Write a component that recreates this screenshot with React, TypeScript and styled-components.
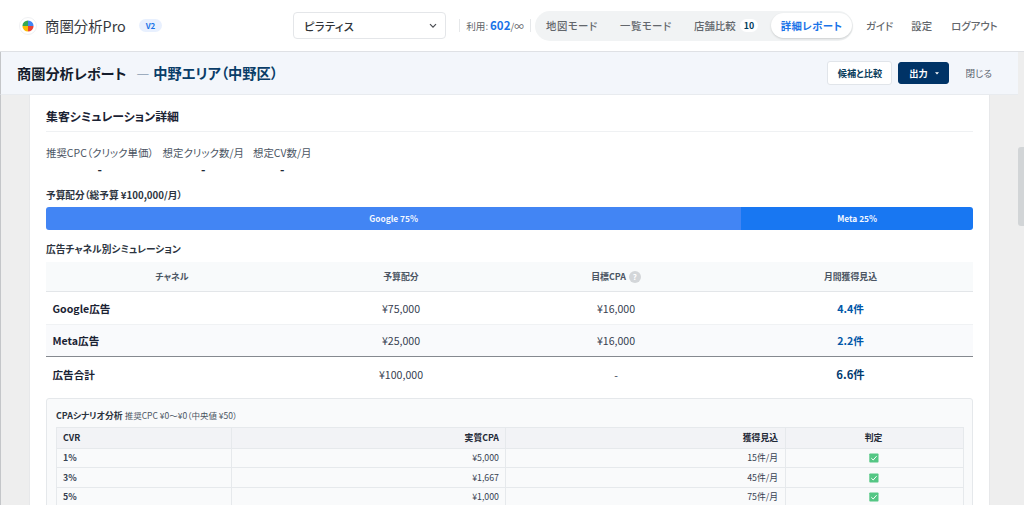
import React from "react";
import styled, { createGlobalStyle } from "styled-components";

const GlobalStyle = createGlobalStyle`
  * { box-sizing: border-box; }
  html, body { margin: 0; padding: 0; overflow: hidden; }
  body {
    font-family: "Noto Sans CJK JP", "Noto Sans", sans-serif;
    font-feature-settings: "palt";
    color: #1f2937;
    background: #eeeeee;
  }
`;

const Screen = styled.div`
  width: 1024px;
  height: 505px;
  display: flex;
  flex-direction: column;
  overflow: hidden;
  white-space: nowrap;
`;

const Header = styled.header`
  height: 52px;
  flex: none;
  display: flex;
  align-items: center;
  background: #fff;
  border-bottom: 1px solid #dfe1e5;
  padding-left: 19px;
`;

const LogoMark = styled.div`
  width: 18px;
  height: 18px;
  border-radius: 50%;
  border: 1px solid #f0f1f3;
  display: flex;
  align-items: center;
  justify-content: center;
`;

const Brand = styled.span`
  margin-left: 8px;
  width: 82px;
  font-size: 14.4px;
  line-height: 20px;
  color: #36393e;
`;

const Version = styled.span`
  margin-left: 12px;
  width: 23px;
  height: 13px;
  border-radius: 7px;
  background: #e8f0fe;
  color: #1a73e8;
  font-size: 8px;
  font-weight: 700;
  line-height: 14px;
  text-align: center;
`;

const Select = styled.div`
  margin-left: 131px;
  width: 153px;
  height: 27px;
  border: 1px solid #e4e6e9;
  border-radius: 4px;
  display: flex;
  align-items: center;
  justify-content: space-between;
  padding: 0 8px 0 10px;
  font-size: 11.2px;
  letter-spacing: 0.4px;
  font-weight: 500;
  color: #303338;
`;

const Usage = styled.div`
  margin-left: 13px;
  width: 72px;
  height: 13px;
  border-left: 1px solid #e6e8ea;
  border-right: 1px solid #e6e8ea;
  display: flex;
  align-items: center;
  justify-content: center;
  font-size: 9.6px;
  color: #5f6368;
  b { font-size: 11.5px; color: #1a73e8; margin-left: 2px; position: relative; top: -1px; }
`;

const Modes = styled.nav`
  margin-left: 4px;
  width: 318px;
  height: 30px;
  border-radius: 15px;
  background: #f1f3f4;
  display: flex;
  align-items: center;
  padding: 0 1px 0 11px;
  font-size: 10.4px;
  font-weight: 500;
  color: #63676c;
`;

const Mode = styled.span<{ $w: number; $track?: boolean }>`
  width: ${(p) => p.$w}px;
  flex: none;
  letter-spacing: ${(p) => (p.$track ? 0.5 : 0)}px;
`;

const Count = styled.span`
  width: 18px;
  height: 13px;
  border-radius: 7px;
  background: #fff;
  color: #003a5c;
  font-size: 8.8px;
  font-weight: 700;
  line-height: 14px;
  text-align: center;
`;

const ActiveMode = styled.span`
  margin-left: auto;
  width: 81px;
  height: 25px;
  border-radius: 13px;
  background: #fff;
  box-shadow: 0 1px 2px rgba(60, 64, 67, 0.2);
  color: #1a73e8;
  font-weight: 700;
  letter-spacing: 0.4px;
  line-height: 26px;
  text-align: center;
`;

const Link = styled.a<{ $gap: number }>`
  margin-left: ${(p) => p.$gap}px;
  font-size: 10.4px;
  font-weight: 500;
  color: #63676c;
`;

const ReportBar = styled.div`
  height: 43px;
  flex: none;
  width: 1018px;
  display: flex;
  align-items: center;
  background: #f3f6fb;
  border-bottom: 1px solid #e8ebef;
  border-left: 1px solid #c4c6c9;
  padding-left: 16px;
`;

const ReportTitle = styled.h1`
  margin: 0;
  font-size: 14.2px;
  line-height: 20px;
  font-weight: 700;
  color: #141c2c;
`;

const Area = styled.span`
  margin-left: 10px;
  font-size: 14.25px;
  line-height: 20px;
  font-weight: 700;
  color: #0a3d68;
  i { font-style: normal; font-weight: 400; color: #8a9bb0; margin-right: 4px; }
`;

const Button = styled.button<{ $primary?: boolean; $w: number }>`
  width: ${(p) => p.$w}px;
  height: ${(p) => (p.$primary ? 22 : 24)}px;
  border: 1px solid ${(p) => (p.$primary ? "#003366" : "#e1e5ea")};
  border-radius: 3px;
  background: ${(p) => (p.$primary ? "#003366" : "#fff")};
  color: ${(p) => (p.$primary ? "#fff" : "#0a3d5c")};
  font: 700 9.2px "Noto Sans CJK JP", sans-serif;
  font-feature-settings: "palt";
  padding: 0;
  display: flex;
  align-items: center;
  justify-content: center;
  gap: 7px;
`;

const Actions = styled.div`
  margin-left: auto;
  padding-right: 26px;
  display: flex;
  align-items: center;
  gap: 6px;
`;

const CloseLink = styled.span`
  margin-left: 10px;
  font-size: 9.6px;
  color: #5b6470;
`;

const Body = styled.div`
  flex: 1;
  min-height: 0;
  display: flex;
  border-left: 1px solid #c4c6c9;
  padding-left: 28px;
`;

const Paper = styled.main`
  width: 961px;
  background: #fff;
  border-left: 1px solid #e7e8ea;
  border-right: 1px solid #e7e8ea;
  padding: 0 16px;
  overflow: hidden;
`;

const ScrollThumb = styled.div`
  margin: 52px 0 0 auto;
  width: 6px;
  height: 79px;
  border-radius: 3px 0 0 3px;
  background: #d2d5d7;
`;

const SectionTitle = styled.h2`
  margin: 0;
  height: 37px;
  padding-top: 11px;
  border-bottom: 1px solid #eff1f3;
  font-size: 11.9px;
  line-height: 20px;
  color: #1a2233;
`;

const Metrics = styled.div`
  display: flex;
  gap: 9px;
  height: 55px;
  padding-top: 12px;
`;

const Metric = styled.div`
  font-size: 10.45px;
  line-height: 17px;
  color: #4b5563;
  text-align: center;
  b { display: block; font-size: 12px; line-height: 16px; color: #1f2937; }
`;

const Caption = styled.h3<{ $h: number }>`
  margin: 0;
  height: ${(p) => p.$h}px;
  line-height: 16px;
  font-size: 9.7px;
  font-weight: 700;
  color: #2c3440;
`;

const BudgetBar = styled.div`
  display: flex;
  height: 23px;
  border-radius: 3px;
  overflow: hidden;
  margin-bottom: 11px;
`;

const Share = styled.div<{ $pct: number; $color: string }>`
  width: ${(p) => p.$pct}%;
  background: ${(p) => p.$color};
  color: #f4f8ff;
  font-size: 8.35px;
  font-weight: 700;
  line-height: 23px;
  text-align: center;
`;

const ChannelRow = styled.div<{ $h: number; $bg?: string; $line?: string }>`
  display: grid;
  grid-template-columns: 252px 206px 224px 245px;
  align-items: center;
  height: ${(p) => p.$h}px;
  background: ${(p) => p.$bg || "#fff"};
  border-bottom: ${(p) => p.$line || "0"};
  font-size: 10.6px;
  color: #374151;
`;

const Cell = styled.div<{ $kind?: "name" | "head" | "gain" | "total" }>`
  display: flex;
  align-items: center;
  justify-content: ${(p) => (p.$kind === "name" ? "flex-start" : "center")};
  padding-left: ${(p) => (p.$kind === "name" ? 6.5 : 0)}px;
  font-weight: ${(p) => (p.$kind ? 700 : 400)};
  font-size: ${(p) => (p.$kind === "head" ? "8.9px" : p.$kind === "total" ? "11.3px" : "inherit")};
  color: ${(p) =>
    p.$kind === "name" ? "#1a2233" : p.$kind === "head" ? "#4b5563" : p.$kind === "gain" ? "#0057a8" : p.$kind === "total" ? "#003a70" : "inherit"};
`;

const Help = styled.span`
  margin-left: 3px;
  width: 12px;
  height: 12px;
  border-radius: 50%;
  background: #d3d6d9;
  color: #fff;
  font-size: 8px;
  line-height: 12px;
  text-align: center;
`;

const Scenario = styled.section`
  margin-top: 7px;
  height: 140px;
  border: 1px solid #e5e8eb;
  border-radius: 3px;
  background: #f9fafb;
  padding: 8px 9px 0;
`;

const ScenarioTitle = styled.div`
  height: 20px;
  line-height: 16px;
  font-size: 8.8px;
  font-weight: 700;
  color: #2c3440;
  span { font-weight: 400; font-size: 8.5px; color: #4b5563; }
`;

const ScenarioTable = styled.table`
  width: 907px;
  table-layout: fixed;
  border-collapse: collapse;
  font-size: 8.8px;
  color: #374151;
  th, td {
    border: 1px solid #e6e9ec;
    height: 19.7px;
    padding: 0 6px;
    line-height: 16px;
    text-align: right;
  }
  th { background: #f2f3f6; height: 20.5px; color: #1f2937; }
  th:first-child, td:first-child { text-align: left; font-weight: 700; }
  th:last-child, td:last-child { text-align: center; padding: 0 7px 0 5px; }
  th:nth-child(3), td:nth-child(3) { padding-right: 7px; }
  svg { display: inline-block; vertical-align: -2px; }
`;

const Check = () => (
  <svg width="10" height="10" viewBox="0 0 10 10">
    <rect x="0.3" y="0.5" width="9.2" height="9" rx="0.8" fill="#54c684" />
    <path d="M2.3 5.2 4.2 7 7.6 3.2" fill="none" stroke="#fff" strokeWidth="1" />
  </svg>
);

const Logo = () => (
  <svg width="12" height="12" viewBox="0 0 11 11">
    <path d="M5.5 5.5V.4A5.1 5.1 0 0 1 10.6 5.5Z" fill="#4285f4" />
    <path d="M5.5 5.5H10.6A5.1 5.1 0 0 1 5.5 10.6Z" fill="#ea4335" />
    <path d="M5.5 5.5V10.6A5.1 5.1 0 0 1 .4 5.5Z" fill="#fbbc04" />
    <path d="M5.5 5.5H.4A5.1 5.1 0 0 1 5.5 .4Z" fill="#34a853" />
  </svg>
);

const channels = [
  { name: "Google広告", budget: "¥75,000", cpa: "¥16,000", gain: "4.4件" },
  { name: "Meta広告", budget: "¥25,000", cpa: "¥16,000", gain: "2.2件" },
];

const scenarios = [
  ["1%", "¥5,000", "15件/月"],
  ["3%", "¥1,667", "45件/月"],
  ["5%", "¥1,000", "75件/月"],
];

export default function App() {
  return (
    <Screen>
      <GlobalStyle />
      <Header>
        <LogoMark><Logo /></LogoMark>
        <Brand>商圏分析Pro</Brand>
        <Version>V2</Version>
        <Select>
          ピラティス
          <svg width="8" height="6" viewBox="0 0 8 6"><path d="M1 1.2 4 4.2 7 1.2" fill="none" stroke="#4a4d52" strokeWidth="1.2" /></svg>
        </Select>
        <Usage>利用:<b>602</b>/∞</Usage>
        <Modes>
          <Mode $w={74} $track>地図モード</Mode>
          <Mode $w={74} $track>一覧モード</Mode>
          <Mode $w={46}>店舗比較</Mode>
          <Count>10</Count>
          <ActiveMode>詳細レポート</ActiveMode>
        </Modes>
        <Link $gap={13}>ガイド</Link>
        <Link $gap={18}>設定</Link>
        <Link $gap={19}>ログアウト</Link>
      </Header>
      <ReportBar>
        <ReportTitle>商圏分析レポート</ReportTitle>
        <Area><i>—</i>中野エリア（中野区）</Area>
        <Actions>
          <Button $w={65}>候補と比較</Button>
          <Button $w={51} $primary>
            出力
            <svg width="4" height="3" viewBox="0 0 4 3"><path d="M0 .3H4L2 2.5Z" fill="#fff" /></svg>
          </Button>
          <CloseLink>閉じる</CloseLink>
        </Actions>
      </ReportBar>
      <Body>
        <Paper>
          <SectionTitle>集客シミュレーション詳細</SectionTitle>
          <Metrics>
            <Metric>推奨CPC（クリック単価）<b>-</b></Metric>
            <Metric>想定クリック数/月<b>-</b></Metric>
            <Metric>想定CV数/月<b>-</b></Metric>
          </Metrics>
          <Caption $h={20}>予算配分（総予算 ¥100,000/月）</Caption>
          <BudgetBar>
            <Share $pct={75} $color="#4285f4">Google 75%</Share>
            <Share $pct={25} $color="#1877f2">Meta 25%</Share>
          </BudgetBar>
          <Caption $h={21}>広告チャネル別シミュレーション</Caption>
          <ChannelRow $h={30} $bg="#f8fafb" $line="1px solid #e3e6e9">
            <Cell $kind="head">チャネル</Cell>
            <Cell $kind="head">予算配分</Cell>
            <Cell $kind="head">目標CPA<Help>?</Help></Cell>
            <Cell $kind="head">月間獲得見込</Cell>
          </ChannelRow>
          {channels.map((c, i) => (
            <ChannelRow key={c.name} $h={i ? 32 : 33} $bg={i ? "#f9fafc" : "#fff"} $line={i ? "1px solid #85898f" : "1px solid #f0f2f4"}>
              <Cell $kind="name">{c.name}</Cell>
              <Cell>{c.budget}</Cell>
              <Cell>{c.cpa}</Cell>
              <Cell $kind="gain">{c.gain}</Cell>
            </ChannelRow>
          ))}
          <ChannelRow $h={34}>
            <Cell $kind="name">広告合計</Cell>
            <Cell>¥100,000</Cell>
            <Cell>-</Cell>
            <Cell $kind="total">6.6件</Cell>
          </ChannelRow>
          <Scenario>
            <ScenarioTitle>CPAシナリオ分析 <span>推奨CPC ¥0〜¥0（中央値 ¥50）</span></ScenarioTitle>
            <ScenarioTable>
              <colgroup><col width="175" /><col width="274" /><col width="280" /><col width="178" /></colgroup>
              <thead><tr><th>CVR</th><th>実質CPA</th><th>獲得見込</th><th>判定</th></tr></thead>
              <tbody>
                {scenarios.map((r) => (
                  <tr key={r[0]}>{r.map((v) => <td key={v}>{v}</td>)}<td><Check /></td></tr>
                ))}
              </tbody>
            </ScenarioTable>
          </Scenario>
        </Paper>
        <ScrollThumb />
      </Body>
    </Screen>
  );
}
